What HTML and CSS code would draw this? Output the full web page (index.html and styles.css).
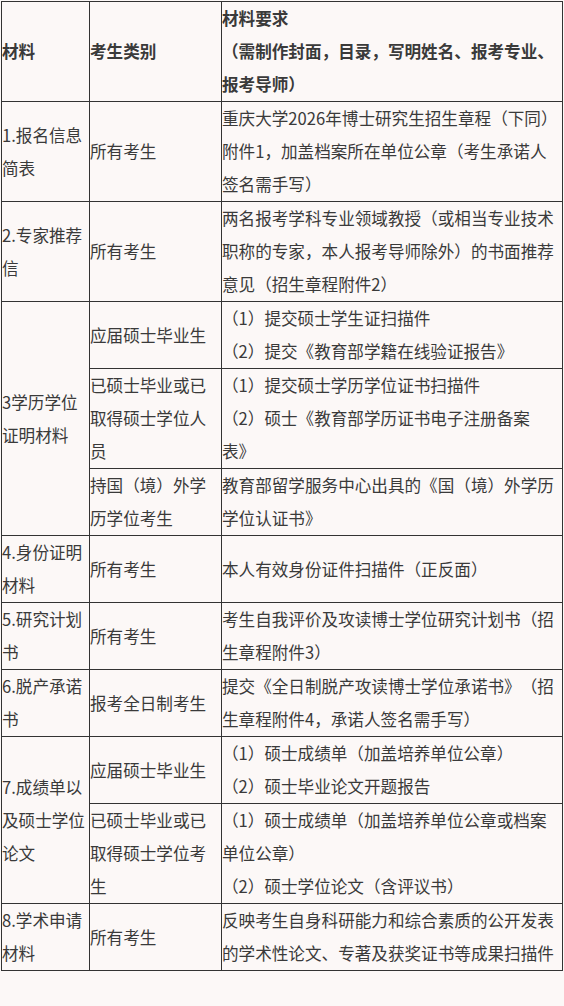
FILE: index.html
```html
<!DOCTYPE html>
<html lang="zh-CN">
<head>
<meta charset="utf-8">
<title>材料要求</title>
<link rel="stylesheet" href="styles.css">
</head>
<body>
<table class="req">
  <colgroup>
    <col class="c1">
    <col class="c2">
    <col class="c3">
  </colgroup>
  <tr class="head">
    <td>材料</td>
    <td>考生类别</td>
    <td>材料要求<br>（需制作封面，目录，写明姓名、报考专业、报考导师）</td>
  </tr>
  <tr>
    <td>1.报名信息简表</td>
    <td>所有考生</td>
    <td>重庆大学2026年博士研究生招生章程（下同）附件1，加盖档案所在单位公章（考生承诺人签名需手写）</td>
  </tr>
  <tr>
    <td>2.专家推荐信</td>
    <td>所有考生</td>
    <td>两名报考学科专业领域教授（或相当专业技术职称的专家，本人报考导师除外）的书面推荐意见（招生章程附件2）</td>
  </tr>
  <tr>
    <td rowspan="3">3学历学位证明材料</td>
    <td>应届硕士毕业生</td>
    <td>（1）提交硕士学生证扫描件<br>（2）提交《教育部学籍在线验证报告》</td>
  </tr>
  <tr>
    <td>已硕士毕业或已取得硕士学位人员</td>
    <td>（1）提交硕士学历学位证书扫描件<br>（2）硕士《教育部学历证书电子注册备案表》</td>
  </tr>
  <tr>
    <td>持国（境）外学历学位考生</td>
    <td>教育部留学服务中心出具的《国（境）外学历学位认证书》</td>
  </tr>
  <tr>
    <td>4.身份证明材料</td>
    <td>所有考生</td>
    <td>本人有效身份证件扫描件（正反面）</td>
  </tr>
  <tr>
    <td>5.研究计划书</td>
    <td>所有考生</td>
    <td>考生自我评价及攻读博士学位研究计划书（招生章程附件3）</td>
  </tr>
  <tr>
    <td>6.脱产承诺书</td>
    <td>报考全日制考生</td>
    <td>提交《全日制脱产攻读博士学位承诺书》（招生章程附件4，承诺人签名需手写）</td>
  </tr>
  <tr>
    <td rowspan="2">7.成绩单以及硕士学位论文</td>
    <td>应届硕士毕业生</td>
    <td>（1）硕士成绩单（加盖培养单位公章）<br>（2）硕士毕业论文开题报告</td>
  </tr>
  <tr>
    <td>已硕士毕业或已取得硕士学位考生</td>
    <td>（1）硕士成绩单（加盖培养单位公章或档案单位公章）<br>（2）硕士学位论文（含评议书）</td>
  </tr>
  <tr>
    <td>8.学术申请材料</td>
    <td>所有考生</td>
    <td>反映考生自身科研能力和综合素质的公开发表的学术性论文、专著及获奖证书等成果扫描件</td>
  </tr>
</table>
</body>
</html>
```
FILE: styles.css
```css
html, body {
  margin: 0;
  padding: 0;
  background: #fcf8f7;
}
body {
  padding: 1px 0 0 1px;
  font-family: "Noto Sans CJK SC", sans-serif;
  font-size: 16.6px;
  line-height: 33px;
  color: #3a3a3a;
  text-spacing-trim: space-all;
}
.req {
  border-collapse: collapse;
  table-layout: fixed;
  width: 561px;
}
.c1 { width: 88px; }
.c2 { width: 132px; }
.c3 { width: 341px; }
.req td {
  border: 1px solid #333333;
  padding: 0;
  vertical-align: middle;
  text-align: left;
  word-break: break-all;
  text-spacing-trim: space-all;
}
.req td:last-child {
  padding-right: 1px;
}
.head td {
  font-weight: bold;
}
```
